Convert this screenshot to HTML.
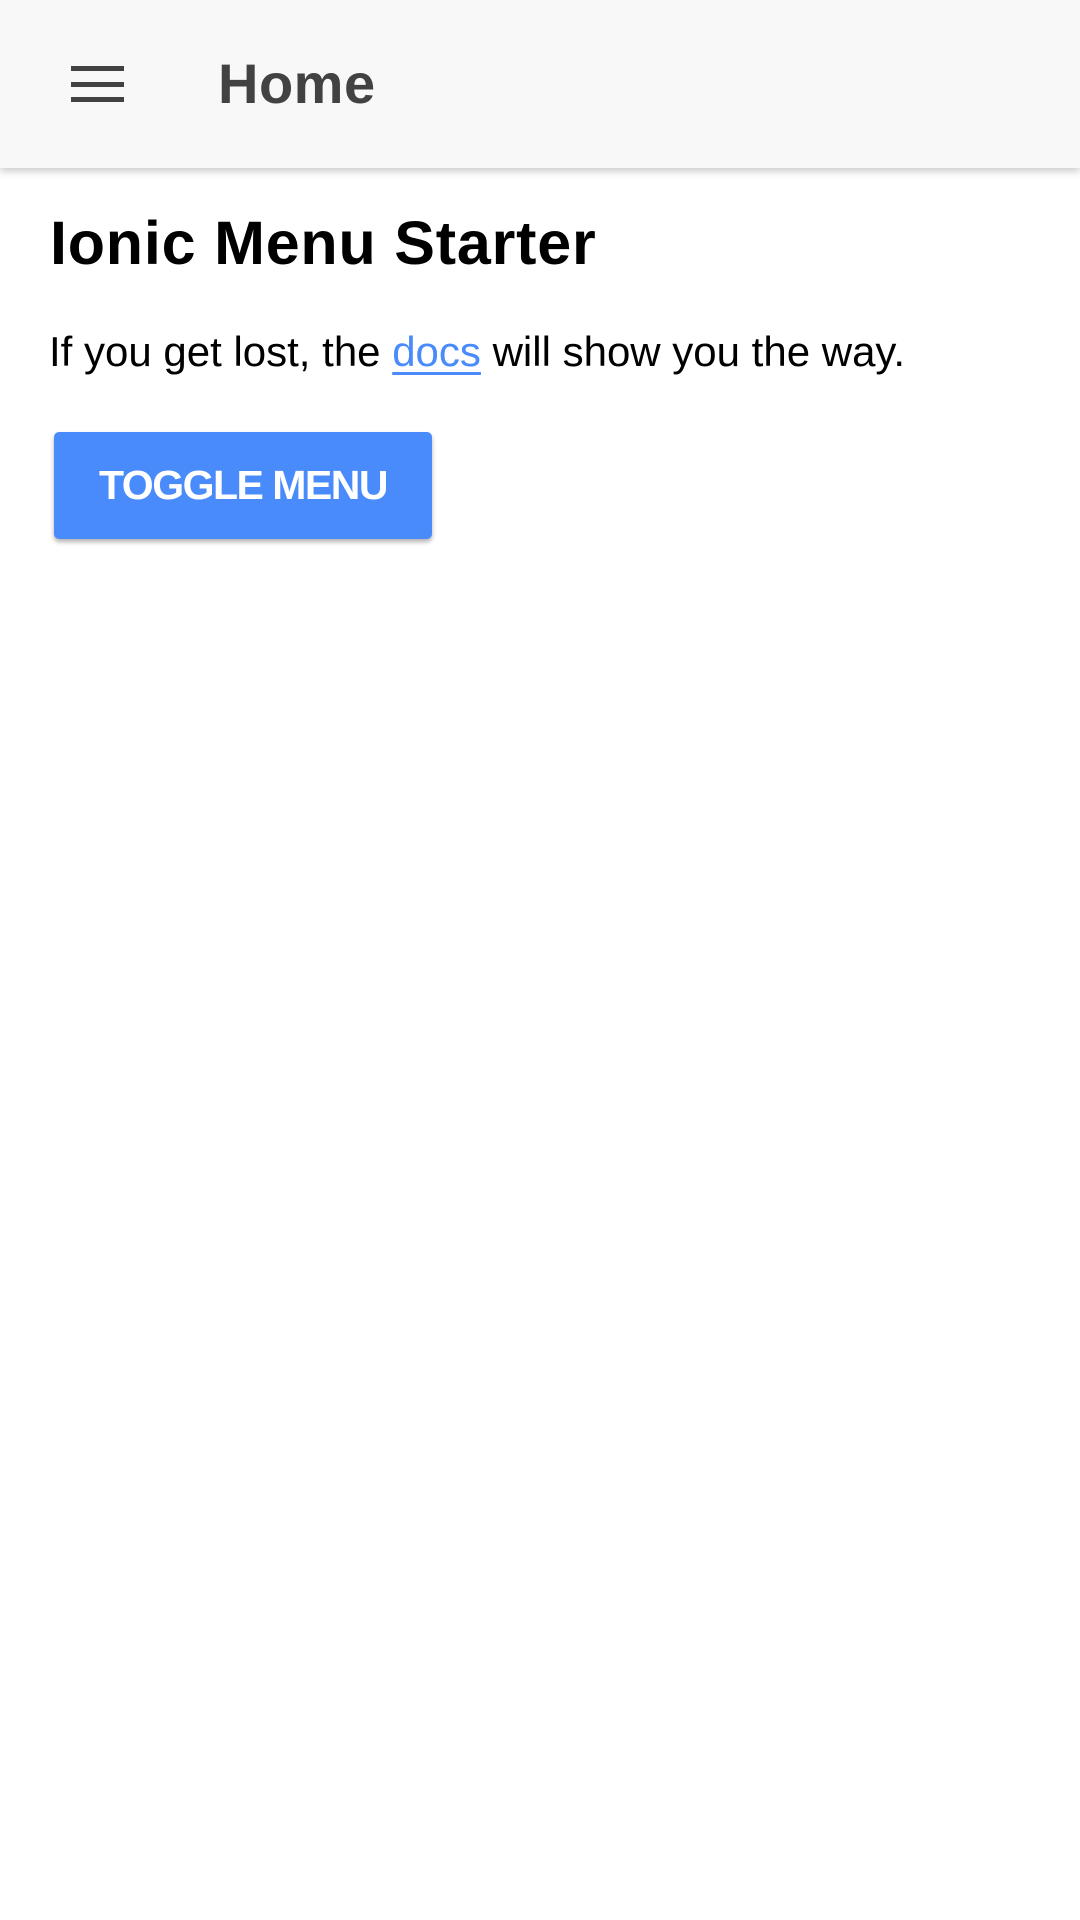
<!DOCTYPE html>
<html><head><meta charset="utf-8"><style>
html,body{margin:0;padding:0;width:1080px;height:1920px;background:#fff;overflow:hidden;font-family:"Liberation Sans",sans-serif;}
.hdr{position:absolute;left:0;top:0;width:1080px;height:168px;background:#f8f8f8;box-shadow:0 3px 8px rgba(0,0,0,.22);}
.bar{position:absolute;left:71px;width:53px;height:5px;background:#424242;}
.home{position:absolute;left:218px;top:46px;font-size:56px;font-weight:bold;color:#424242;line-height:76px;letter-spacing:0.5px;}
h1{position:absolute;left:50px;top:203px;margin:0;font-size:61px;font-weight:bold;line-height:80px;color:#000;letter-spacing:0.8px;white-space:nowrap;}
p{position:absolute;left:49px;top:324px;margin:0;font-size:42px;line-height:56px;color:#000;white-space:nowrap;letter-spacing:0px;}
a{color:#4a8bfc;text-decoration:underline;text-underline-offset:6px;text-decoration-thickness:3px;}
.btn{position:absolute;left:54px;top:432px;width:378px;height:107px;background:#4a8bfc;border-radius:5px;box-shadow:0 3px 5px rgba(0,0,0,.3);color:#fff;font-size:41px;font-weight:bold;text-align:center;line-height:107px;letter-spacing:-1.5px;}
</style></head><body>
<div class="hdr">
<div class="bar" style="top:66px"></div>
<div class="bar" style="top:82px"></div>
<div class="bar" style="top:97px"></div>
<div class="home">Home</div>
</div>
<h1>Ionic Menu Starter</h1>
<p>If you get lost, the <a>docs</a> will show you the way.</p>
<div class="btn">TOGGLE MENU</div>
</body></html>
